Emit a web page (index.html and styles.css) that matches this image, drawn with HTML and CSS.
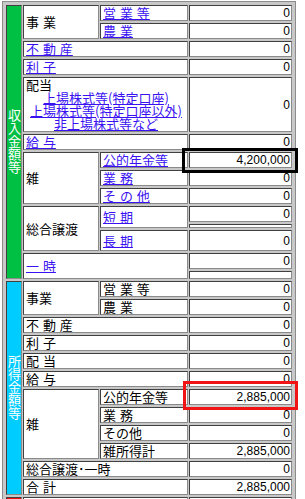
FILE: index.html
```html
<!DOCTYPE html>
<html lang="ja">
<head>
    <meta charset="UTF-8">
    <title>所得金額等</title>
    <meta name="viewport" content="width=device-width, initial-scale=1.0">
    <link rel="stylesheet" href="styles.css">
</head>
<body>
    <table class="shotoku">
        <colgroup>
            <col class="c-midashi">
            <col class="c-kubun">
            <col class="c-shosai">
            <col class="c-kin">
        </colgroup>

        <!-- 収入金額等 -->
        <tr>
            <td class="midashi shunyu" rowspan="14"><span class="tate">収入金額等</span></td>
            <td rowspan="2">事 業</td>
            <td><a href="#">営 業 等</a></td>
            <td class="kin">0</td>
        </tr>
        <tr>
            <td><a href="#">農 業</a></td>
            <td class="kin">0</td>
        </tr>
        <tr>
            <td colspan="2"><a href="#">不 動 産</a></td>
            <td class="kin">0</td>
        </tr>
        <tr>
            <td colspan="2"><a href="#">利 子</a></td>
            <td class="kin">0</td>
        </tr>
        <tr class="r-haito">
            <td colspan="2" class="haito">
                <div>配当</div>
                <div class="haito-links">
                    <a href="#">上場株式等(特定口座)</a><br>
                    <a href="#">上場株式等(特定口座以外)</a><br>
                    <a href="#">非上場株式等など</a>
                </div>
            </td>
            <td class="kin">0</td>
        </tr>
        <tr>
            <td colspan="2"><a href="#">給 与</a></td>
            <td class="kin">0</td>
        </tr>
        <tr>
            <td rowspan="3">雑</td>
            <td><a href="#">公的年金等</a></td>
            <td class="kin waku-kuro">4,200,000</td>
        </tr>
        <tr>
            <td><a href="#">業 務</a></td>
            <td class="kin">0</td>
        </tr>
        <tr>
            <td><a href="#">そ の 他</a></td>
            <td class="kin">0</td>
        </tr>
        <tr>
            <td rowspan="3">総合譲渡</td>
            <td rowspan="2"><a href="#">短 期</a></td>
            <td class="kin">0</td>
        </tr>
        <tr class="sukima sukima-s">
            <td></td>
        </tr>
        <tr class="r-choki">
            <td><a href="#">長 期</a></td>
            <td class="kin">0</td>
        </tr>
        <tr>
            <td colspan="2" rowspan="2"><a href="#">一 時</a></td>
            <td class="kin">0</td>
        </tr>
        <tr class="sukima sukima-l">
            <td></td>
        </tr>

        <!-- 所得金額等 -->
        <tr>
            <td class="midashi shotoku-kin" rowspan="12"><span class="tate">所得金額等</span></td>
            <td rowspan="2">事業</td>
            <td>営 業 等</td>
            <td class="kin">0</td>
        </tr>
        <tr>
            <td>農 業</td>
            <td class="kin">0</td>
        </tr>
        <tr>
            <td colspan="2">不 動 産</td>
            <td class="kin">0</td>
        </tr>
        <tr>
            <td colspan="2">利 子</td>
            <td class="kin">0</td>
        </tr>
        <tr>
            <td colspan="2">配 当</td>
            <td class="kin">0</td>
        </tr>
        <tr>
            <td colspan="2">給 与</td>
            <td class="kin">0</td>
        </tr>
        <tr>
            <td rowspan="4">雑</td>
            <td>公的年金等</td>
            <td class="kin waku-aka">2,885,000</td>
        </tr>
        <tr>
            <td>業 務</td>
            <td class="kin">0</td>
        </tr>
        <tr>
            <td>その他</td>
            <td class="kin">0</td>
        </tr>
        <tr>
            <td>雑所得計</td>
            <td class="kin">2,885,000</td>
        </tr>
        <tr>
            <td colspan="2">総合譲渡･一時</td>
            <td class="kin">0</td>
        </tr>
        <tr>
            <td colspan="2">合 計</td>
            <td class="kin">2,885,000</td>
        </tr>

        <!-- 次の区分（画面外に続く） -->
        <tr>
            <td class="midashi kojo" rowspan="2"></td>
            <td colspan="2"></td>
            <td class="kin"></td>
        </tr>
        <tr>
            <td colspan="2"></td>
            <td class="kin"></td>
        </tr>
    </table>
</body>
</html>
```

FILE: styles.css
```css
html, body {
    overflow: hidden;
}

body {
    margin: 0;
    background-color: #fff;
    font-family: "Noto Sans CJK JP", sans-serif;
    font-size: 13px;
    line-height: 14px;
    color: #000;
}

a {
    color: #3a12f2;
}

.shotoku {
    table-layout: fixed;
    width: 294px;
    margin: 1px 0 0 2px;
    padding: 1px 2px;
    border: 1px solid #8c8c8c;
    border-spacing: 1px 2px;
    background-color: #c8c8c8;
}

.c-midashi { width: 16px; }
.c-kubun { width: 76px; }
.c-shosai { width: 88px; }
.c-kin { width: 103px; }

.shotoku tr {
    height: 16px;
}

.shotoku td {
    padding: 0 1px 0 2px;
    background-color: #fff;
    border: 1px solid;
    border-color: #404040 #8a8a8a #8a8a8a #404040;
    word-spacing: 1px;
    white-space: nowrap;
    overflow: visible;
}

/* 縦書きの見出し */
.shotoku td.midashi {
    padding: 0;
    text-align: center;
    vertical-align: middle;
    color: #fff;
}

.tate {
    display: inline-block;
    writing-mode: vertical-rl;
    text-orientation: upright;
    line-height: 14px;
}

.shotoku td.shunyu {
    background-color: #00c043;
}

.shotoku td.shotoku-kin {
    background-color: #00ccff;
}

.shotoku td.kojo {
    background-color: #f01010;
}

/* 金額欄 */
.shotoku td.kin {
    padding: 0 1px 0 0;
    text-align: right;
    font-family: "Liberation Sans", Arial, sans-serif;
    font-size: 12px;
}

.shotoku tr.r-haito {
    height: 55px;
}

.shotoku td.haito {
    padding-bottom: 1px;
    line-height: 13px;
    vertical-align: top;
}

.haito-links {
    text-align: center;
}

.shotoku tr.r-choki {
    height: 21px;
}

/* 短い区切り行 */
.shotoku tr.sukima td {
    padding: 0;
    font-size: 0;
    line-height: 0;
}

.shotoku tr.sukima-s {
    height: 4px;
}

.shotoku tr.sukima-l {
    height: 8px;
}

/* 強調枠 */
.waku-kuro,
.waku-aka {
    position: relative;
}

.waku-kuro::after,
.waku-aka::after {
    content: "";
    position: absolute;
    left: -8px;
    right: -7px;
    border: 3px solid #000;
}

.waku-kuro::after {
    top: -5px;
    bottom: -6px;
}

.waku-aka::after {
    left: -7px;
    top: -9px;
    bottom: -6px;
    border-color: #f01414;
}
```
